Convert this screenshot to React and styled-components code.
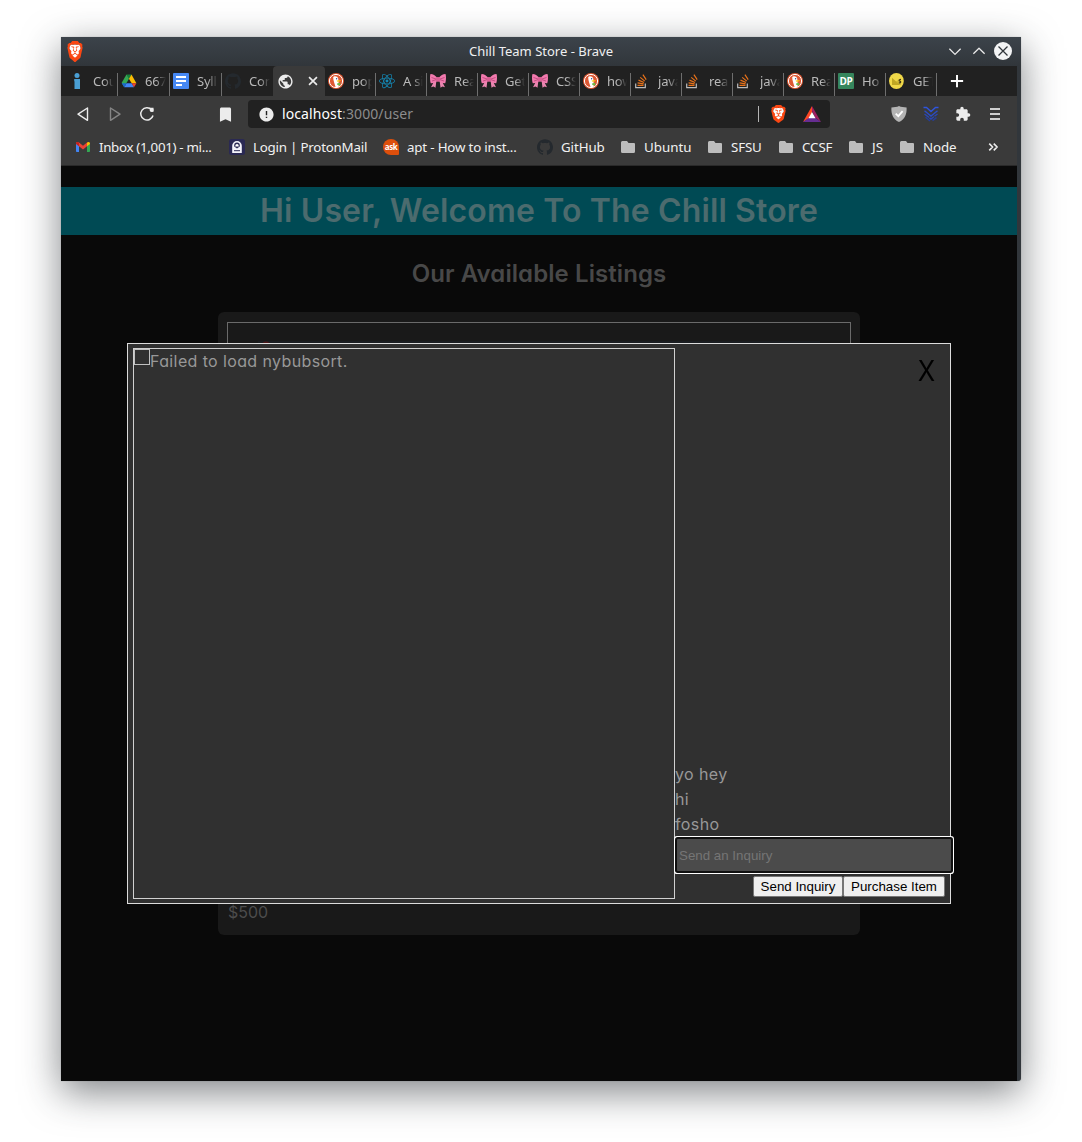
import React from "react";
import styled, { createGlobalStyle } from "styled-components";
import { SiBrave, SiGithub, SiReact } from "react-icons/si";
import { MdPublic, MdExtension, MdBookmark, MdError } from "react-icons/md";

const Global = createGlobalStyle`
  * { box-sizing: border-box; }
  body { margin: 0; background: #fff; }
`;

const uiFont = `"Noto Sans", "Open Sans", sans-serif`;

const Desktop = styled.main`
  width: 1082px;
  height: 1142px;
  padding: 37px 61px 61px;
  overflow: hidden;
  background: #fff;
`;

const Window = styled.div`
  display: flex;
  flex-direction: column;
  width: 960px;
  height: 1044px;
  background: #31363b;
  border-radius: 1px 1px 3px 0;
  box-shadow: 0 0 1px rgba(40, 45, 50, 0.5), 0 11px 38px rgba(36, 42, 46, 0.58);
  font: 13.33px/18px ${uiFont};
`;

const TitleBar = styled.header`
  display: grid;
  grid-template-columns: 70px 1fr 70px;
  align-items: center;
  height: 29px;
  padding: 0 9px 0 5px;
  background: linear-gradient(#3c434a, #31363b);
  color: #eff0f1;
  font-size: 13px;
`;

const WindowTitle = styled.div`
  text-align: center;
  padding: 0 0 2px 4px;
`;

const WindowButtons = styled.div`
  display: flex;
  justify-content: flex-end;
  align-items: center;
  gap: 6px;
  padding-bottom: 2px;
`;

const Browser = styled.div`
  display: flex;
  flex-direction: column;
  flex: 1;
  width: 956px;
  background: #3a3a3a;
`;

const TabStrip = styled.nav`
  display: flex;
  height: 30px;
  padding-left: 5px;
  background: #212121;
`;

const Tab = styled.div`
  display: flex;
  align-items: center;
  gap: 8px;
  width: ${(p) => p.$width}px;
  padding: 0 4px 0 3px;
  color: #b9b9b9;
  background: linear-gradient(#6e6e6e, #6e6e6e) right bottom / ${(p) => (p.$line ? "1px 23px" : "0 0")} no-repeat;
  svg { flex: none; }
`;

const ActiveTab = styled(Tab)`
  width: 52px;
  margin-left: -1px;
  padding: 0 5px 0 4px;
  justify-content: space-between;
  background: #3a3a3a;
  border-radius: 4px 4px 0 0;
`;

const TabLabel = styled.span`
  flex: 1;
  min-width: 0;
  white-space: nowrap;
  font-size: 13px;
  letter-spacing: -0.2px;
  -webkit-mask-image: linear-gradient(90deg, #000 50%, transparent 100%);
  mask-image: linear-gradient(90deg, #000 50%, transparent 100%);
`;

const NewTab = styled.div`
  display: flex;
  align-items: center;
  padding-left: 13px;
`;

const Toolbar = styled.div`
  display: flex;
  align-items: center;
  height: 36px;
  padding: 0 14px;
`;

const ToolGroup = styled.div`
  display: flex;
  align-items: center;
  gap: ${(p) => p.$gap}px;
  margin-left: ${(p) => p.$left || 0}px;
  color: #ececec;
`;

const AddressBar = styled.div`
  display: flex;
  align-items: center;
  flex: none;
  width: 582px;
  height: 28px;
  margin-left: 13px;
  padding: 0 9px 0 10px;
  border-radius: 4px;
  background: #212121;
  color: #ececec;
`;

const Url = styled.div`
  flex: 1;
  margin-left: 7px;
  font-size: 14px;
  letter-spacing: 0.1px;
  color: #8c8c8c;
  b { font-weight: 400; color: #fff; }
`;

const UrlDivider = styled.span`
  width: 1px;
  height: 16px;
  margin-right: 11px;
  background: #b5b5b5;
`;

const Bookmarks = styled.div`
  display: flex;
  align-items: center;
  height: 34px;
  padding: 0 0 4px 14px;
  border-bottom: 1px solid #292929;
  color: #f1f1f1;
`;

const Bookmark = styled.div`
  display: flex;
  align-items: center;
  gap: 8px;
  width: ${(p) => p.$width}px;
  letter-spacing: ${(p) => p.$track}px;
  white-space: nowrap;
  svg { flex: none; }
`;

const Page = styled.section`
  position: relative;
  flex: 1;
  padding-top: 21px;
  background: #090909;
  font-family: Inter, "Open Sans", sans-serif;
  font-feature-settings: "cv11";
  overflow: hidden;
`;

const Banner = styled.h1`
  height: 48px;
  margin: 0;
  background: #004a54;
  color: #4c6b6e;
  text-align: center;
  font-size: 32px;
  line-height: 48px;
  font-weight: 600;
  letter-spacing: 0.13px;
`;

const Heading = styled.h2`
  margin: 21px 0 20px;
  color: #484848;
  text-align: center;
  font-size: 24px;
  line-height: 36px;
  font-weight: 600;
  letter-spacing: 0.08px;
`;

const Listing = styled.article`
  display: flex;
  flex-direction: column;
  width: 642px;
  height: 623px;
  margin: 0 auto;
  padding: 10px 9px 9px;
  border-radius: 6px;
  background: #191919;
`;

const ListingPicture = styled.div`
  height: 571px;
  padding: 18px 30px;
  border: 1px solid #6a6a6a;
`;

const PictureStrip = styled.div`
  height: 40px;
  background: radial-gradient(circle at 8px 5px, #4b1518 0 4px, transparent 5px), #1a1d21;
`;

const Price = styled.p`
  margin: 7px 0 0 1px;
  color: #4c4c4c;
  font-size: 16px;
  line-height: 24px;
`;

/* Item dialog, floating over the listings */
const Modal = styled.div`
  position: absolute;
  left: 66px;
  top: 177px;
  display: flex;
  width: 824px;
  height: 561px;
  padding: 4px 5px;
  border: 1px solid #dcdcdc;
  background: #303030;
  color: #989898;
  font-size: 16px;
  line-height: 25px;
`;

const Photo = styled.div`
  display: flex;
  align-items: flex-start;
  width: 542px;
  height: 551px;
  border: 1px solid #d0d0d0;
`;

const MissingImage = styled.span`
  width: 16px;
  height: 16px;
  border: 1px solid #c0c0c0;
`;

const AltText = styled.span`
  letter-spacing: 0.38px;
`;

const Side = styled.div`
  display: flex;
  flex-direction: column;
  width: 270px;
  height: 551px;
`;

const Close = styled.div`
  align-self: flex-end;
  padding: 4px 9px 0 0;
  color: #000;
  font-size: 29px;
  line-height: 38px;
  transform: scaleX(0.88);
`;

const Messages = styled.div`
  margin-top: auto;
  letter-spacing: 0.4px;
  p { margin: 0; }
`;

const Field = styled.input`
  width: 274px;
  height: 32px;
  margin: 2px 0 5px 2px;
  padding: 0 0 0 2px;
  border: 0;
  border-radius: 1px;
  outline: none;
  flex: none;
  background: #4b4b4b;
  box-shadow: 0 0 0 2px #101010, 0 0 0 3px #fff;
  font: 13.33px "Liberation Sans", Arial, sans-serif;
  &::placeholder { color: #757575; opacity: 1; }
`;

const Actions = styled.div`
  display: flex;
  justify-content: flex-end;
  height: 23px;
`;

const Button = styled.button`
  width: ${(p) => p.$width}px;
  height: 21px;
  padding: 0;
  border: 1px solid #767676;
  border-radius: 2px;
  background: #efefef;
  color: #000;
  font: 13.33px/17px "Liberation Sans", Arial, sans-serif;
`;

function Lion({ w = 16, h = 18 }) {
  return (
    <svg width={w} height={h} viewBox="0 0 24 24" preserveAspectRatio="none">
      <path d="M5 4h14l1 9-8 8-8-8z" fill="#fff" />
      <SiBrave x="0" y="0" width="24" height="24" size={24} color="#fb4713" />
    </svg>
  );
}

function Duck() {
  return (
    <svg width="16" height="16" viewBox="0 0 16 16">
      <circle cx="8" cy="8" r="8" fill="#de5833" />
      <circle cx="8" cy="8" r="6.6" fill="none" stroke="#fff" strokeWidth="1" />
      <path d="M5.2 4.2C6 2.8 9.6 2.9 10.2 5.5l.3 2.5.2 6-3 .5C6.900 11.500 5 7 5.200 4.200z" fill="#fff" />
      <path d="M8.600 7.600l3.800-.3c.8.2.2 1.100-3.200 1.500z" fill="#fdd20a" />
      <path d="M9 10.600l3.200-.8v2.800L9.400 12z" fill="#67bd47" />
      <circle cx="8.600" cy="5.800" r=".7" fill="#2d4f8e" />
    </svg>
  );
}

function Bow() {
  return (
    <svg width="16" height="16" viewBox="0 0 16 16">
      <path d="M6.500 7L5.500 14.800 3.600 13.500 1 14.300 4.200 8zM9.500 7l1 7.800 1.900-1.300 2.600.8L11.800 8z" fill="#ea86b0" />
      <path d="M7 4.500C5.500 2.500 2.500.8.5 1-.3 3-.1 8 .8 10.200 3.500 10.300 6 9.500 7 8zM9 4.500C10.500 2.500 13.500.8 15.500 1c.8 2 .6 7-.3 9.200C12.500 10.300 10 9.500 9 8z" fill="#f27aae" />
      <path d="M1.500 4.500L6 6M2 8l4-1.300M14.500 4.500L10 6M14 8l-4-1.300" stroke="#b94678" strokeWidth=".8" />
      <rect x="6" y="4" width="4" height="4.800" rx="1.500" fill="#d95f94" />
    </svg>
  );
}

function StackOverflow() {
  return (
    <svg width="16" height="16" viewBox="0 0 16 16" fill="none">
      <path d="M1.700 10.500v4.200h9.600v-4.200" stroke="#bcbbbb" strokeWidth="1.200" />
      <path d="M3.500 12.300h6M3.600 9.900l6 1M4.500 7.100l5.500 2.400M6.200 4.400l4.600 3.700M8.900 1.700l3.300 5" stroke="#e8721a" strokeWidth="1.200" />
    </svg>
  );
}

function InfoMark() {
  return (
    <svg width="16" height="16" viewBox="0 0 16 16" fill="#4a9fd4">
      <circle cx="8" cy="2.500" r="2.500" />
      <path d="M5.200 6H11v10H5.500V8.200h-.3z" />
    </svg>
  );
}

function Drive() {
  return (
    <svg width="16" height="16" viewBox="0 0 16 16">
      <path d="M5.500 1.500h5L8 6z" fill="#188038" />
      <path d="M5.500 1.500L.7 9.800l2.400 4.300L8 5.700z" fill="#34a853" />
      <path d="M10.500 1.500L8 5.700l2.700 4.500h4.700z" fill="#fbbc04" />
      <path d="M5.500 10.200h5.200l2.300 4H3.200z" fill="#4285f4" />
      <path d="M10.700 10.200h4.700L13 14.200z" fill="#ea4335" />
      <path d="M.7 10.200h4.800l-2.300 4z" fill="#1967d2" />
    </svg>
  );
}

function Docs() {
  return (
    <svg width="16" height="16" viewBox="0 0 16 16">
      <rect width="16" height="16" rx="1" fill="#4688f4" />
      <path d="M3 4h10M3 8h10M3 12h6" stroke="#fff" strokeWidth="1.800" />
    </svg>
  );
}

const LogoLabel = styled.span`
  display: flex;
  align-items: center;
  justify-content: center;
  flex: none;
  width: 16px;
  height: 16px;
  border-radius: ${(p) => p.$radius};
  background: ${(p) => p.$bg};
  color: #fff;
  font: 700 ${(p) => p.$size}px/16px "Open Sans", sans-serif;
  letter-spacing: -0.4px;
`;

function Lemon() {
  return (
    <svg width="16" height="16" viewBox="0 0 16 16">
      <ellipse cx="7.400" cy="8" rx="7.400" ry="8" fill="#f0d849" />
      <path d="M3 5l8 7H3z" fill="#c4a920" />
      <path d="M3 5l4 3.500 5-3.500v7H3z" fill="#bda527" opacity=".6" />
      <path d="M12 6.500c-2-.3-2.500 1.300-1 1.700s.8 2-1.200 1.600" fill="none" stroke="#3b3415" strokeWidth="1.100" />
    </svg>
  );
}

function Gmail() {
  return (
    <svg width="16" height="16" viewBox="0 0 16 16">
      <path d="M1 4l3 2.500V13H1.800A.8.8 0 0 1 1 12.200z" fill="#4285f4" />
      <path d="M15 4l-3 2.500V13h2.200a.8.8 0 0 0 .8-.8z" fill="#34a853" />
      <path d="M1 4.500C1 2.800 2.700 2.500 4 3.500l4 3.200 4-3.200V7.200L8 10.400 4 7.200z" fill="#ea4335" />
      <path d="M1 4.500C1 2.800 2.700 2.500 4 3.500v3.700L1 5z" fill="#c5221f" />
      <path d="M15 4.500C15 2.800 13.300 2.500 12 3.500v3.700L15 5z" fill="#fbbc04" />
    </svg>
  );
}

function Proton() {
  return (
    <svg width="16" height="16" viewBox="0 0 16 16">
      <rect width="16" height="16" rx="2.500" fill="#2a2953" />
      <path d="M3.200 6.800a4.800 4.800 0 0 1 9.600 0V14H3.200z" fill="#f3f3fa" />
      <path d="M5.200 7.500V6.400a2.800 2.800 0 0 1 5.600 0v1.100L8 9.500z" fill="#2a2953" />
      <path d="M6.300 6.700a1.700 1.700 0 0 1 3.400 0v.8H6.300z" fill="#fff" />
      <path d="M5 11.700h6" stroke="#2a2953" />
    </svg>
  );
}

function Folder() {
  return (
    <svg width="16" height="16" viewBox="0 0 16 16">
      <path d="M1 3.500Q1 2 2.400 2H7l1.500 2H14q1 0 1 1v7.500q0 1.500-1.400 1.500H2.400Q1 14 1 12.500z" fill="#bdbdbd" />
    </svg>
  );
}

function Line({ d, size = 16, color = "#ececec", w = 1.4 }) {
  return (
    <svg width={size} height={size} viewBox="0 0 16 16" fill="none" stroke={color} strokeWidth={w} strokeLinejoin="round">
      <path d={d} />
    </svg>
  );
}

function Reload() {
  return (
    <svg width="16" height="16" viewBox="0 0 16 16" fill="none" stroke="#ececec" strokeWidth="1.500">
      <path d="M12.600 3.700A6.200 6.200 0 1 0 14 9.500" />
      <path d="M10.500 1.800h4v3.900h-1.600z" fill="#ececec" stroke="none" />
      <circle cx="12.600" cy="4" r="2" fill="#ececec" stroke="none" />
    </svg>
  );
}

function CloseWindow() {
  return (
    <svg width="18" height="18" viewBox="0 0 18 18">
      <circle cx="9" cy="9" r="9" fill="#f3f4f5" />
      <path d="M4.500 4.500l9 9M13.500 4.500l-9 9" stroke="#31363b" strokeWidth="1.300" />
    </svg>
  );
}

function Rewards() {
  return (
    <svg width="18" height="16" viewBox="0 0 18 16">
      <path d="M9 0L0 16l9-5.500z" fill="#ff4724" />
      <path d="M9 0l9 16-6-4.500L9 5z" fill="#9e1f63" />
      <path d="M0 16h18l-5.500-4h-7z" fill="#662d91" />
      <path d="M9 6l3.500 6.200h-7z" fill="#fff" />
    </svg>
  );
}

function Shield() {
  return (
    <svg width="16" height="16" viewBox="0 0 16 16">
      <path d="M8 0c2 1 5 1.300 7.600 1.500C15.900 8 14 13.500 8 16 2 13.500.1 8 .4 1.500 3 1.300 6 1 8 0z" fill="#b4b4b4" />
      <path d="M4.700 7.700L7.300 10.200l4.300-5" fill="none" stroke="#fff" strokeWidth="1.800" />
    </svg>
  );
}

function Chevrons() {
  return (
    <svg width="16" height="16" viewBox="0 0 16 16" fill="none" stroke="#2f55dd" strokeWidth="1.400">
      <path d="M.5 1.500h3l4.500 4 4.500-4h3" />
      <path d="M1.500 4.800L8 10l6.500-5.200" stroke="#2b4cc4" />
      <path d="M1.500 8L8 13l6.500-5" stroke="#2846b4" strokeDasharray="5.500 .8" />
      <path d="M2.500 11.300L7 15M9.500 14.600l4-3" stroke="#253d99" />
    </svg>
  );
}

const github = <SiGithub size={16} color="#24292e" />;
const leftTabs = [
  [<InfoMark />, "Cou"],
  [<Drive />, "667"],
  [<Docs />, "Syll"],
  [github, "Con"],
];
const rightTabs = [
  [<Duck />, "pop"],
  [<SiReact size={16} color="#1488b5" />, "A si"],
  [<Bow />, "Rea"],
  [<Bow />, "Get"],
  [<Bow />, "CSS"],
  [<Duck />, "how"],
  [<StackOverflow />, "java"],
  [<StackOverflow />, "rea"],
  [<StackOverflow />, "java"],
  [<Duck />, "Rea"],
  [<LogoLabel $bg="#36865d" $radius="1px" $size={10}>DP</LogoLabel>, "Ho"],
  [<Lemon />, "GET"],
];
const bookmarks = [
  [<Gmail />, "Inbox (1,001) - mi...", 154, -0.32],
  [<Proton />, "Login | ProtonMail", 154, -0.22],
  [<LogoLabel $bg="#dd4f0c" $radius="8px 8px 1px 8px" $size={8}>ask</LogoLabel>, "apt - How to inst...", 154, -0.18],
  [github, "GitHub", 83, -0.1],
  [<Folder />, "Ubuntu", 87, 0],
  [<Folder />, "SFSU", 71, -0.15],
  [<Folder />, "CCSF", 70, -0.1],
  [<Folder />, "JS", 51, 0],
  [<Folder />, "Node", 88, -0.1],
];

export default function App() {
  return (
    <Desktop>
      <Global />
      <Window>
        <TitleBar>
          <Lion w={18} h={21} />
          <WindowTitle>Chill Team Store - Brave</WindowTitle>
          <WindowButtons>
            <Line size={18} w={1.1} d="M3 6l5 5 5-5" />
            <Line size={18} w={1.1} d="M3 10.500l5-5 5 5" />
            <CloseWindow />
          </WindowButtons>
        </TitleBar>
        <Browser>
          <TabStrip>
            {leftTabs.map(([icon, label], i) => (
              <Tab key={i} $width={52} $line={i < 3}>{icon}<TabLabel>{label}</TabLabel></Tab>
            ))}
            <ActiveTab>
              <MdPublic size={17} color="#ececec" />
              <Line size={14} w={1.9} d="M3.500 3.500l9 9M12.500 3.500l-9 9" />
            </ActiveTab>
            {rightTabs.map(([icon, label], i) => (
              <Tab key={i} $width={51} $line>{icon}<TabLabel>{label}</TabLabel></Tab>
            ))}
            <NewTab><Line size={14} w={2.2} color="#fff" d="M8 1v14M1 8h14" /></NewTab>
          </TabStrip>
          <Toolbar>
            <ToolGroup $gap={16}>
              <Line d="M12.500 2v12.300L3 8.200z" />
              <Line d="M3.500 2v12.300L13 8.200z" color="#858585" />
              <Reload />
            </ToolGroup>
            <ToolGroup $gap={0} $left={61}><MdBookmark size={19} /></ToolGroup>
            <AddressBar>
              <MdError size={17} />
              <Url><b>localhost</b>:3000/user</Url>
              <UrlDivider />
              <Lion w={17} h={18} />
              <ToolGroup $gap={0} $left={16}><Rewards /></ToolGroup>
            </AddressBar>
            <ToolGroup $gap={16} $left={61}>
              <Shield />
              <Chevrons />
              <MdExtension size={16} />
              <Line w={1.9} color="#d0d0d0" d="M3 3h10M3 8h10M3 13h10" />
            </ToolGroup>
          </Toolbar>
          <Bookmarks>
            {bookmarks.map(([icon, label, width, track]) => (
              <Bookmark key={label} $width={width} $track={track}>{icon}{label}</Bookmark>
            ))}
            <Line size={12} w={2.2} d="M3 3.500l4.500 4.500L3 12.500M9 3.500l4.500 4.500L9 12.500" />
          </Bookmarks>
          <Page>
            <Banner>Hi User, Welcome To The Chill Store</Banner>
            <Heading>Our Available Listings</Heading>
            <Listing>
              <ListingPicture><PictureStrip /></ListingPicture>
              <Price>$500</Price>
            </Listing>
            <Modal>
              <Photo>
                <MissingImage />
                <AltText>Failed to load nybubsort.</AltText>
              </Photo>
              <Side>
                <Close>X</Close>
                <Messages>
                  <p>yo hey</p>
                  <p>hi</p>
                  <p>fosho</p>
                </Messages>
                <Field placeholder="Send an Inquiry" />
                <Actions>
                  <Button $width={90}>Send Inquiry</Button>
                  <Button $width={102}>Purchase Item</Button>
                </Actions>
              </Side>
            </Modal>
          </Page>
        </Browser>
      </Window>
    </Desktop>
  );
}
